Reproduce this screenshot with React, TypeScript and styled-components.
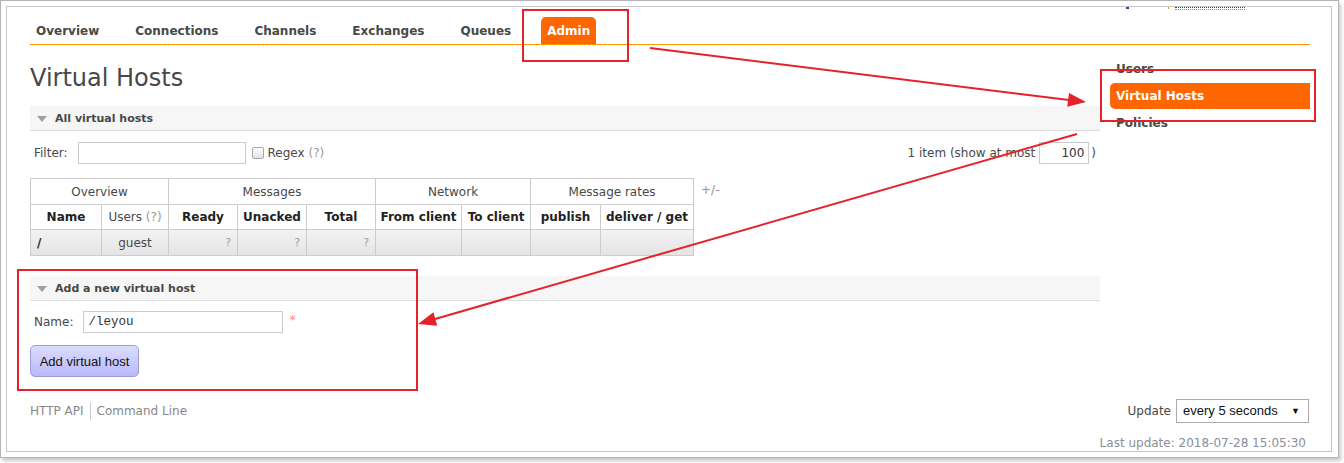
import styled, { createGlobalStyle } from "styled-components";

const GlobalStyle = createGlobalStyle`
  html, body {
    margin: 0;
    padding: 0;
    background: #fff;
  }
  body {
    font-family: "DejaVu Sans", Verdana, sans-serif;
    font-size: 12px;
    color: #484848;
  }
  * {
    box-sizing: border-box;
  }
`;

const tabs = ["Overview", "Connections", "Channels", "Exchanges", "Queues", "Admin"];
const adminLinks = ["Users", "Virtual Hosts", "Policies"];

const columns = [
  { label: "Name", width: 71, bold: true },
  { label: "Users", width: 67, bold: false, help: true },
  { label: "Ready", width: 69, bold: true },
  { label: "Unacked", width: 69, bold: true },
  { label: "Total", width: 69, bold: true },
  { label: "From client", width: 86, bold: true },
  { label: "To client", width: 69, bold: true },
  { label: "publish", width: 70, bold: true },
  { label: "deliver / get", width: 93, bold: true },
];

const groups = [
  { label: "Overview", span: 2 },
  { label: "Messages", span: 3 },
  { label: "Network", span: 2 },
  { label: "Message rates", span: 2 },
];

const App = () => {
  return (
    <Page>
      <GlobalStyle />
      <Frame>
        <Window>
          <TopInfo>
            <Mark $color="#3b3f8a" $w={3} />
            <Mark $color="#f0a030" $w={1} $gap={39} />
            <DottedUser />
          </TopInfo>
          <Content>
            <Nav>
              {tabs.map((t) => (
                <Tab key={t} $active={t === "Admin"}>
                  {t}
                </Tab>
              ))}
            </Nav>
            <BodyRow>
              <Main>
                <Title>Virtual Hosts</Title>

                <SectionHeader>All virtual hosts</SectionHeader>
                <FilterRow>
                  <FilterLeft>
                    <Label>Filter:</Label>
                    <TextInput $w={168} $ml={10} readOnly value="" />
                    <CheckBox />
                    <Label $ml={4}>
                      Regex <Help>(?)</Help>
                    </Label>
                  </FilterLeft>
                  <FilterRight>
                    <Label>1 item (show at most</Label>
                    <TextInput $w={50} $ml={4} $right readOnly value="100" />
                    <Label $ml={2}>)</Label>
                  </FilterRight>
                </FilterRow>

                <TableRow>
                  <Table>
                    <colgroup>
                      {columns.map((c) => (
                        <Col key={c.label} $w={c.width} />
                      ))}
                    </colgroup>
                    <thead>
                      <tr>
                        {groups.map((g) => (
                          <GroupCell key={g.label} colSpan={g.span}>
                            {g.label}
                          </GroupCell>
                        ))}
                      </tr>
                      <tr>
                        {columns.map((c) => (
                          <HeadCell key={c.label} $bold={c.bold}>
                            {c.label}
                            {c.help && <Help> (?)</Help>}
                          </HeadCell>
                        ))}
                      </tr>
                    </thead>
                    <tbody>
                      <DataRow>
                        <DataCell $bold>/</DataCell>
                        <DataCell $align="center">guest</DataCell>
                        <DataCell $align="right" $muted>?</DataCell>
                        <DataCell $align="right" $muted>?</DataCell>
                        <DataCell $align="right" $muted>?</DataCell>
                        <DataCell />
                        <DataCell />
                        <DataCell />
                        <DataCell />
                      </DataRow>
                    </tbody>
                  </Table>
                  <Toggle>+/-</Toggle>
                </TableRow>

                <SectionHeader $mt={20}>Add a new virtual host</SectionHeader>
                <NameRow>
                  <Label>Name:</Label>
                  <TextInput $w={200} $ml={10} $mono readOnly value="/leyou" />
                  <Required>*</Required>
                </NameRow>
                <AddButton>Add virtual host</AddButton>
              </Main>

              <Sidebar>
                {adminLinks.map((l) => (
                  <SideLink key={l} $active={l === "Virtual Hosts"}>
                    {l}
                  </SideLink>
                ))}
              </Sidebar>
            </BodyRow>

            <Footer>
              <FooterLinks>
                <FooterLink>HTTP API</FooterLink>
                <FooterLink $sep>Command Line</FooterLink>
              </FooterLinks>
              <UpdateBox>
                <Label>Update</Label>
                <SelectWrap>every 5 seconds</SelectWrap>
              </UpdateBox>
            </Footer>
            <LastUpdate>Last update: 2018-07-28 15:05:30</LastUpdate>
          </Content>
        </Window>
      </Frame>

      <Annotations width="1344" height="463" viewBox="0 0 1344 463">
        <rect x="523" y="10" width="105" height="51" />
        <rect x="1101" y="70" width="214" height="51" />
        <rect x="18" y="270" width="399" height="120" />
        <line x1="650" y1="48" x2="1069" y2="100" />
        <polygon points="1086,102 1067.2,106.7 1069,92.9" />
        <line x1="1077" y1="134" x2="435" y2="319" />
        <polygon points="418,324 433.4,312.3 437.2,325.7" />
      </Annotations>
    </Page>
  );
};

export default App;

// styled-component

const Page = styled.div`
  position: relative;
  width: 1344px;
  height: 463px;
  overflow: hidden;
`;

const Frame = styled.div`
  width: 1339px;
  height: 458px;
  border: 1px solid #b4b4b4;
  padding: 5px 6px 5px 5px;
  box-shadow: 2px 3px 4px rgba(0, 0, 0, 0.22);
  background: #fff;
`;

const Window = styled.div`
  height: 446px;
  border: 1px solid #c6c6c6;
  overflow: hidden;
`;

const TopInfo = styled.div`
  height: 4px;
  display: flex;
  align-items: flex-start;
  padding-left: 1119px;
`;

const Mark = styled.span<{ $color: string; $w: number; $gap?: number }>`
  display: block;
  width: ${(p) => p.$w}px;
  height: 2px;
  background: ${(p) => p.$color};
  margin-left: ${(p) => p.$gap ?? 0}px;
`;

const DottedUser = styled.span`
  display: block;
  width: 70px;
  height: 3px;
  margin-left: 6px;
  border-top: 1px dotted #444;
  border-bottom: 1px dotted #888;
`;

const Content = styled.div`
  width: 1303px;
  padding-left: 23px;
`;

const Nav = styled.nav`
  display: flex;
  align-items: flex-end;
  padding-top: 6px;
  border-bottom: 1px solid #f90;
`;

const Tab = styled.a<{ $active?: boolean }>`
  display: block;
  padding: 7px 6px 6px;
  margin-right: ${(p) => (p.$active ? 0 : 24)}px;
  line-height: 14px;
  font-weight: bold;
  font-size: 12px;
  color: ${(p) => (p.$active ? "#fff" : "#484848")};
  background: ${(p) => (p.$active ? "#f60" : "transparent")};
  border-radius: 5px 5px 0 0;
`;

const BodyRow = styled.div`
  display: flex;
  gap: 10px;
`;

const Main = styled.div`
  width: 1070px;
`;

const Title = styled.h1`
  margin: 18px 0 13px;
  font-size: 24px;
  line-height: 30px;
  font-weight: normal;
  color: #484848;
`;

const SectionHeader = styled.h2<{ $mt?: number }>`
  position: relative;
  margin: ${(p) => p.$mt ?? 0}px 0 0;
  height: 25px;
  padding-left: 25px;
  line-height: 26px;
  font-size: 11px;
  font-weight: bold;
  color: #484848;
  background: #f6f6f6;
  border-bottom: 1px solid #ddd;

  &::before {
    content: "";
    position: absolute;
    left: 7px;
    top: 10px;
    border-left: 5px solid transparent;
    border-right: 5px solid transparent;
    border-top: 6px solid #a0a0a0;
  }
`;

const FilterRow = styled.div`
  margin-top: 11px;
  height: 22px;
  display: flex;
  align-items: center;
  justify-content: space-between;
  padding: 0 4px;
`;

const FilterLeft = styled.div`
  display: flex;
  align-items: center;
`;

const FilterRight = styled.div`
  display: flex;
  align-items: center;
`;

const Label = styled.span<{ $ml?: number }>`
  margin-left: ${(p) => p.$ml ?? 0}px;
  white-space: nowrap;
  color: #484848;
`;

const Help = styled.span`
  color: #999;
  font-weight: normal;
`;

const TextInput = styled.input<{ $w: number; $ml?: number; $right?: boolean; $mono?: boolean }>`
  width: ${(p) => p.$w}px;
  height: 22px;
  margin: 0 0 0 ${(p) => p.$ml ?? 0}px;
  padding: 0 4px;
  border: 1px solid #ccc;
  outline: none;
  background: #fff;
  color: #333;
  text-align: ${(p) => (p.$right ? "right" : "left")};
  font-family: ${(p) =>
    p.$mono ? '"Liberation Mono", "Courier New", monospace' : '"DejaVu Sans", Verdana, sans-serif'};
  font-size: ${(p) => (p.$mono ? "12.5px" : "12px")};
`;

const CheckBox = styled.span`
  display: block;
  width: 12px;
  height: 12px;
  margin-left: 6px;
  border: 1px solid #a8a8a8;
  border-radius: 2px;
  background: linear-gradient(#fdfdfd, #e4e4e4);
`;

const TableRow = styled.div`
  margin-top: 14px;
  display: flex;
  align-items: flex-start;
  gap: 7px;
`;

const Table = styled.table`
  width: 663px;
  table-layout: fixed;
  border-collapse: collapse;
  font-size: 12px;
`;

const Col = styled.col<{ $w: number }>`
  width: ${(p) => p.$w}px;
`;

const GroupCell = styled.th`
  height: 26px;
  padding: 0 4px;
  border: 1px solid #ccc;
  font-weight: normal;
  text-align: center;
  color: #484848;
  white-space: nowrap;
`;

const HeadCell = styled.th<{ $bold?: boolean }>`
  height: 25px;
  padding: 0 3px;
  border: 1px solid #ccc;
  font-weight: ${(p) => (p.$bold ? "bold" : "normal")};
  text-align: center;
  color: ${(p) => (p.$bold ? "#222" : "#484848")};
  white-space: nowrap;
`;

const DataRow = styled.tr`
  background: linear-gradient(#f3f3f3, #e3e3e3);
`;

const DataCell = styled.td<{ $align?: string; $bold?: boolean; $muted?: boolean }>`
  height: 26px;
  padding: 0 6px;
  border: 1px solid #ccc;
  text-align: ${(p) => p.$align ?? "left"};
  font-weight: ${(p) => (p.$bold ? "bold" : "normal")};
  color: ${(p) => (p.$muted ? "#a0a0a0" : p.$bold ? "#222" : "#484848")};
  font-size: ${(p) => (p.$muted ? "11px" : "12px")};
`;

const Toggle = styled.span`
  padding-top: 5px;
  color: #a09090;
`;

const NameRow = styled.div`
  margin-top: 10px;
  height: 22px;
  display: flex;
  align-items: center;
  padding-left: 4px;
`;

const Required = styled.span`
  align-self: flex-start;
  margin-left: 6px;
  margin-top: 2px;
  color: #f88;
  font-size: 12px;
`;

const AddButton = styled.button`
  display: block;
  margin-top: 12px;
  width: 109px;
  height: 32px;
  padding: 0;
  border: 1px solid #9c9cd8;
  border-radius: 5px;
  background: linear-gradient(#dcdcff, #b9b9fa);
  font-family: "Liberation Sans", Arial, sans-serif;
  font-size: 13px;
  color: #111;
`;

const Sidebar = styled.div`
  width: 200px;
  margin-top: 11px;
`;

const SideLink = styled.a<{ $active?: boolean }>`
  display: block;
  height: 26px;
  margin-bottom: 1px;
  padding: 0 6px;
  line-height: 26px;
  font-weight: bold;
  color: ${(p) => (p.$active ? "#fff" : "#484848")};
  background: ${(p) => (p.$active ? "#f60" : "transparent")};
  border-radius: 5px 0 0 5px;
`;

const Footer = styled.div`
  margin-top: 22px;
  width: 1279px;
  height: 24px;
  display: flex;
  align-items: center;
  justify-content: space-between;
`;

const FooterLinks = styled.div`
  display: flex;
  align-items: center;
`;

const FooterLink = styled.a<{ $sep?: boolean }>`
  color: #888;
  line-height: 18px;
  padding: ${(p) => (p.$sep ? "0 0 0 6px" : "0 6px 0 0")};
  border-left: ${(p) => (p.$sep ? "1px solid #ccc" : "none")};
`;

const UpdateBox = styled.div`
  display: flex;
  align-items: center;
  gap: 5px;
`;

const SelectWrap = styled.div`
  position: relative;
  width: 133px;
  height: 24px;
  padding-left: 6px;
  border: 1px solid #aaa;
  line-height: 22px;
  font-family: "Liberation Sans", Arial, sans-serif;
  font-size: 13px;
  color: #111;
  background: #fff;

  &::after {
    content: "▼";
    position: absolute;
    right: 8px;
    top: 0;
    font-size: 9px;
    color: #111;
  }
`;

const LastUpdate = styled.div`
  margin-top: 13px;
  width: 1276px;
  text-align: right;
  line-height: 14px;
  color: #8a8f99;
`;

const Annotations = styled.svg`
  position: absolute;
  top: 0;
  left: 0;
  pointer-events: none;

  rect,
  line {
    fill: none;
    stroke: #e52129;
    stroke-width: 2;
  }

  polygon {
    fill: #e52129;
  }
`;
